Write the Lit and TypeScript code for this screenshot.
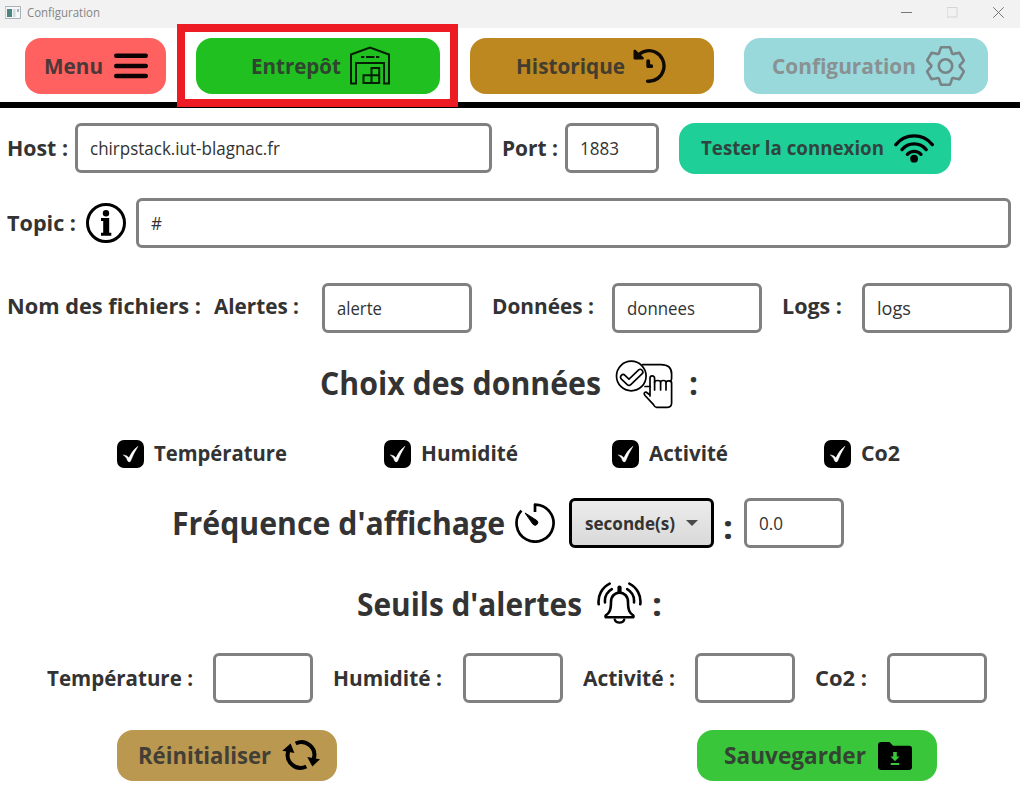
import { LitElement, html, svg, css } from "lit";
import { customElement, property } from "lit/decorators.js";

/* A line of text condensed or stretched so that it fills a given width. */
@customElement("fit-text")
class FitText extends LitElement {
  @property({ type: Number }) width = 0;
  static styles = css`
    :host { display: block; white-space: nowrap; }
    .glyphs { display: inline-block; transform-origin: 0 50%; white-space: pre; }
  `;
  firstUpdated() {
    const el = this.renderRoot.querySelector(".glyphs") as HTMLElement;
    const natural = el.getBoundingClientRect().width;
    this.style.width = `${this.width}px`;
    if (natural > 0) el.style.transform = `scaleX(${this.width / natural})`;
  }
  render() {
    return html`<span class="glyphs"><slot></slot></span>`;
  }
}

const t = (text: string, width: number) => html`<fit-text .width=${width}>${text}</fit-text>`;

const gearPath = (() => {
  const tooth = [[-6, -14.6], [-4.4, -18.7], [4.4, -18.7], [6, -14.6]];
  let d = "";
  for (let i = 0; i <= 6; i++) {
    const a = (i * Math.PI) / 3;
    const p = tooth.map(([x, y]) => [
      (19.5 + x * Math.cos(a) - y * Math.sin(a)).toFixed(2),
      (20 + x * Math.sin(a) + y * Math.cos(a)).toFixed(2),
    ].join(" "));
    d += i === 0 ? `M${p[0]}` : `Q${(19.5 + 12.6 * Math.sin(a - Math.PI / 6)).toFixed(2)} ${(20 - 12.6 * Math.cos(a - Math.PI / 6)).toFixed(2)} ${p[0]}`;
    if (i < 6) d += `L${p[1]}L${p[2]}L${p[3]}`;
  }
  return d + "Z";
})();

const icon = (w: number, h: number, body: unknown) =>
  html`<svg width=${w} height=${h} viewBox="0 0 ${w} ${h}" fill="none" stroke="#000" stroke-linecap="round" stroke-linejoin="round">${body}</svg>`;

const icons = {
  app: icon(16, 14, svg`<rect x=".5" y=".5" width="15" height="12" fill="#f4f6f7" stroke="#a9b2b6"/><rect x="2" y="3" width="5" height="8" fill="#4a8582" stroke="none"/><rect x="8" y="3" width="2.5" height="8" fill="#cfdcdc" stroke="none"/><rect x="12" y="3" width="2" height="3" fill="#a8b2b8" stroke="none"/>`),
  menu: icon(34, 26, svg`<path d="M2.3 2.8H31.7M2.3 13H31.7M2.3 23H31.7" stroke-width="4.6" stroke="#0c0202"/>`),
  warehouse: icon(40, 39, svg`<g stroke-width="2" stroke="#041f04" stroke-linejoin="miter" stroke-linecap="butt"><path d="M1 37.5V8.5L20 1.5L39 8.5V37.5H34V17H6V37.5Z"/><path d="M11 11H14.3M16 11H24.5M26 11H29.3"/><path d="M13.5 29.3H29.2V37H13.5ZM21.5 37V22H29.2V29.3"/></g>`),
  history: icon(34, 36, svg`<g stroke-width="3.4" stroke="#0f0a02"><path d="M4.5 9.5A15 15.3 0 1 1 15.6 33.2"/><path d="M2.8 3V10.3H10.5Z" stroke-width="2.6" fill="#0f0a02"/><path d="M16.2 13.2V18.2H19.3" stroke-width="3.8"/></g>`),
  gear: icon(39, 40, svg`<g stroke-width="2.6" stroke="#788486"><path d=${gearPath}/><circle cx="19.5" cy="20" r="6.7"/></g>`),
  wifi: icon(40, 31, svg`<g stroke-width="3.3"><path d="M1.9 12.6A23.5 23.5 0 0 1 38.3 12.6"/><path d="M8 17.6A15.6 15.6 0 0 1 32.2 17.6"/><path d="M13.4 22.3A9.2 9.2 0 0 1 27 22.3"/></g><circle cx="20.1" cy="26.7" r="3.9" fill="#000" stroke="none"/>`),
  info: icon(40, 40, svg`<circle cx="20" cy="20" r="18.5" stroke-width="3"/><circle cx="20" cy="10.3" r="3.2" fill="#000" stroke="none"/><path d="M15 15H23.2V29.8H25.3V32.8H15V29.8H17.2V18H15Z" fill="#000" stroke="none"/>`),
  choose: icon(58, 49, svg`<g stroke-width="1.7"><path d="M27.5 4.7H46Q56.6 4.700 56.6 14V18Q56.600 20.500 55.500 21.700M30 26.5H35"/><circle cx="16.3" cy="16" r="14.8" fill="#fff"/><path d="M8.2 17.2L14 22.7L25.2 12" stroke-width="6.8"/><path d="M8.2 17.2L14 22.7L25.2 12" stroke-width="3.6" stroke="#fff"/><path d="M35 36V18.2a2.3 2.3 0 0 1 4.6 0V22.5a3 2 0 0 1 6 0a2.7 2 0 0 1 5.4 0a2.8 2 0 0 1 5.6 .7V43q0 4.3-4 4.3H41.5q-1.6 0-3.2-3L30 35.5q-2-3 1-3.5L35 35"/><path d="M39.6 22V30M45.6 23V30M51 23V30"/></g>`),
  timer: icon(40, 40, svg`<path d="M20 9V1.6A18.5 18.5 0 1 1 6.4 7.6" stroke-width="2.7" stroke-linecap="butt"/><path d="M10.4 10.2L21.8 17.5A2.6 2.6 0 0 1 18.3 21.6Z" fill="#000" stroke-width="1"/>`),
  bell: icon(46, 43, svg`<g stroke-width="2.6"><path d="M22.5 5.5V9.5" stroke-width="4.2"/><path d="M14 20C14 7.500 31 7.500 31 20C31 29 33 31 36.300 33.600Q37 35.300 35.500 35.300H9.500Q8 35.300 8.700 33.600C12 31 14 29 14 20Z"/><path d="M17.700 37.500A4.900 4 0 0 0 27.300 37.500" stroke-width="2.300"/><path d="M12.700 1.700A20 20 0 0 0 1.700 22.300M14.800 7.200A14 14 0 0 0 8 20.500"/><path d="M32.300 1.700A20 20 0 0 1 43.300 22.300M30.200 7.200A14 14 0 0 1 37 20.500"/></g>`),
  refresh: icon(38, 32, svg`<g stroke-width="4" stroke-linecap="butt"><path d="M13.700 4.500A12.900 12.900 0 0 1 31.700 20"/><path d="M24.300 27.500A12.900 12.900 0 0 1 6.300 12"/></g><path d="M25.300 18L38 20.300L30.300 27.500ZM12.400 14L.3 11.800L8.600 4.600Z" fill="#000" stroke="none"/>`),
  folder: icon(34, 28, svg`<path d="M3 0H11.500L15 3.700H31Q34 3.700 34 6.700V25Q34 28 31 28H3Q0 28 0 25V3Q0 0 3 0Z" fill="#000" stroke="none"/><path d="M15.200 10H18.800V14.500H21.500L17 19.200L12.500 14.500H15.200ZM12.700 21H21.300V23H12.700Z" fill="#39c63a" stroke="none"/>`),
  tick: icon(27, 28, svg`<path d="M6.500 15Q9.800 14.800 11.900 17.800Q15 10.500 21 6.200Q16.500 13.500 13.500 21.300Q12 22.700 10.700 21Q9.500 17 6.500 15Z" fill="#fff" stroke="#fff" stroke-width=".4"/>`),
};

@customElement("app-root")
class AppRoot extends LitElement {
  static styles = css`
    :host { display: block; position: relative; width: 1020px; height: 793px; overflow: hidden; background: #fff;
      font-family: "Open Sans", "Noto Sans", sans-serif; color: #333; font-size: 22px; font-weight: 700; line-height: 30px; }
    * { box-sizing: border-box; }
    svg { display: block; flex: none; }
    .titlebar { height: 28px; padding: 0 16px 3px 5px; display: flex; align-items: center; background: #f2f2f2;
      font-size: 12px; font-weight: 400; line-height: 16px; color: #858585; }
    .titlebar .name { margin-left: 6px; flex: 1; }
    .controls { display: flex; gap: 35px; }
    .toolbar { height: 80px; border-bottom: 6px solid #000; display: flex; gap: 30px; padding: 10px 0 8px 25px; }
    .btn { display: flex; align-items: center; justify-content: center; border-radius: 16px; }
    .btn fit-text { opacity: .88; margin-bottom: 2px; }
    .nav { width: 244px; height: 56px; gap: 10px; }
    .menu { width: 141px; gap: 11px; padding-left: 1px; background: #ff6060; }
    .depot { background: #20c020; gap: 9px; padding-left: 5px; }
    .depot svg { margin-bottom: 1px; }
    .histo { background: #be8820; gap: 7px; padding-right: 3px; }
    .histo svg { margin-bottom: 1px; }
    .config { background: #99d8db; gap: 10px; padding-left: 4px; }
    .config fit-text { color: #8a9192; opacity: 1; }
    .frame { position: absolute; left: 177px; top: 24px; width: 281px; height: 83px; border: 8px solid #ed1c24; }
    .row { display: grid; align-items: center; height: 50px; }
    .field { height: 50px; border: 3px solid #808080; border-radius: 6px; padding: 0 12px; display: flex; align-items: center;
      font-size: 18px; font-weight: 400; background: #fff; }
    .host { margin-top: 15px; height: 51px; padding-left: 7px; align-items: start; grid-template-columns: 68px 427px 63px 114px 272px; }
    .host > fit-text { margin-top: 9px; }
    .host .addr { width: 417px; } .host .port { width: 94px; }
    .test { height: 51px; background: #1ecf98; gap: 10px; font-size: 20px; padding-left: 4px; }
    .test svg { margin-bottom: 2px; }
    .topic { margin-top: 24px; padding-left: 7px; grid-template-columns: 79px 50px 875px; }
    .topic > fit-text { margin-bottom: 2px; }
    .files { margin-top: 35px; padding-left: 7px; grid-template-columns: 207px 108px 170px 120px 170px 80px 150px; }
    .files > fit-text { margin-bottom: 6px; }
    .files .field { width: 150px; }
    .heading { height: 48px; font-size: 31.5px; line-height: 42px; }
    .heading > fit-text { margin-bottom: 3px; }
    .choice { margin-top: 27px; padding-left: 320px; grid-template-columns: 295px 74px 10px; }
    .choice > fit-text { margin-bottom: 4px; }
    .checks { margin-top: 32px; height: 28px; padding-left: 117px; align-items: start; grid-template-columns: 267px 228px 212px 90px; }
    .check { display: flex; align-items: center; gap: 10px; height: 28px; }
    .check fit-text { margin-bottom: 4px; }
    .box { width: 27px; height: 28px; border-radius: 7px; background: #000; }
    .freq { margin-top: 30px; height: 50px; padding-left: 172px; grid-template-rows: 50px; grid-template-columns: 343px 54px 154px 21px 100px; }
    .freq > fit-text { margin-bottom: 0; }
    .freq .colon { padding-top: 8px; }
    .combo { width: 145px; height: 50px; border: 3px solid #000; border-radius: 6px; padding: 0 13px;
      display: flex; align-items: center; justify-content: space-between; font-size: 18px;
      background: linear-gradient(#ececec, #d9d9d9); }
    .arrow { border: 6px solid transparent; border-top-color: #4a4a4a; border-bottom: 0; }
    .alerts { margin-top: 32px; padding-left: 357px; grid-template-columns: 240px 55px 10px; }
    .alerts > fit-text { margin-bottom: 1px; }
    .alerts svg { margin-bottom: 2px; }
    .limits { margin-top: 25px; padding-left: 47px; grid-template-columns: 166px 120px 130px 120px 112px 120px 72px 100px; }
    .limits > fit-text { margin-bottom: 2px; }
    .limits .field { width: 100px; }
    .actions { margin: 27px 83px 0 117px; display: flex; justify-content: space-between; font-size: 22.5px; }
    .actions .btn { height: 51px; }
    .actions fit-text { margin-bottom: 0; }
    .reset { width: 220px; gap: 11px; padding-left: 4px; background: #ba9850; }
    .reset svg { margin-bottom: 2px; }
    .save { width: 240px; gap: 12px; padding-left: 2px; background: #39c63a; }
  `;

  field(text = "", width = 0, cls = "") {
    return html`<div class="field ${cls}">${text ? t(text, width) : ""}</div>`;
  }
  check(text: string, width: number) {
    return html`<div class="check"><div class="box">${icons.tick}</div>${t(text, width)}</div>`;
  }

  render() {
    return html`
      <div class="titlebar">
        ${icons.app}<div class="name">${t("Configuration", 73)}</div>
        <div class="controls">
          ${icon(11, 11, svg`<path d="M0 5.500H11" stroke="#777"/>`)}
          ${icon(11, 11, svg`<rect x=".5" y=".5" width="9.500" height="9.500" stroke="#d4d4d4"/>`)}
          ${icon(11, 11, svg`<path d="M.5 .5L10.500 10.500M10.500 .5L.5 10.500" stroke="#777"/>`)}
        </div>
      </div>
      <div class="toolbar">
        <div class="btn nav menu">${t("Menu", 59)}${icons.menu}</div>
        <div class="btn nav depot">${t("Entrepôt", 90)}${icons.warehouse}</div>
        <div class="btn nav histo">${t("Historique", 109)}${icons.history}</div>
        <div class="btn nav config">${t("Configuration", 144)}${icons.gear}</div>
      </div>
      <div class="row host">
        ${t("Host :", 61)}${this.field("chirpstack.iut-blagnac.fr", 190, "addr")}
        ${t("Port :", 56)}${this.field("1883", 39, "port")}
        <div class="btn test">${t("Tester la connexion", 183)}${icons.wifi}</div>
      </div>
      <div class="row topic">${t("Topic :", 69)}${icons.info}${this.field("#", 11)}</div>
      <div class="row files">
        ${t("Nom des fichiers :", 194)}${t("Alertes :", 85)}${this.field("alerte", 45)}
        ${t("Données :", 102)}${this.field("donnees", 68)}${t("Logs :", 60)}${this.field("logs", 34)}
      </div>
      <div class="row heading choice">${t("Choix des données", 281)}${icons.choose}${t(":", 9)}</div>
      <div class="row checks">
        ${this.check("Température", 133)}${this.check("Humidité", 97)}${this.check("Activité", 79)}${this.check("Co2", 39)}
      </div>
      <div class="row heading freq">
        ${t("Fréquence d'affichage", 333)}${icons.timer}
        <div class="combo">${t("seconde(s)", 90)}<span class="arrow"></span></div>
        <div class="colon">${t(":", 10)}</div>${this.field("0.0", 24)}
      </div>
      <div class="row heading alerts">${t("Seuils d'alertes", 225)}${icons.bell}${t(":", 10)}</div>
      <div class="row limits">
        ${t("Température :", 146)}${this.field()}${t("Humidité :", 109)}${this.field()}
        ${t("Activité :", 92)}${this.field()}${t("Co2 :", 52)}${this.field()}
      </div>
      <div class="actions">
        <div class="btn reset">${t("Réinitialiser", 133)}${icons.refresh}</div>
        <div class="btn save">${t("Sauvegarder", 142)}${icons.folder}</div>
      </div>
      <div class="frame"></div>
    `;
  }
}
